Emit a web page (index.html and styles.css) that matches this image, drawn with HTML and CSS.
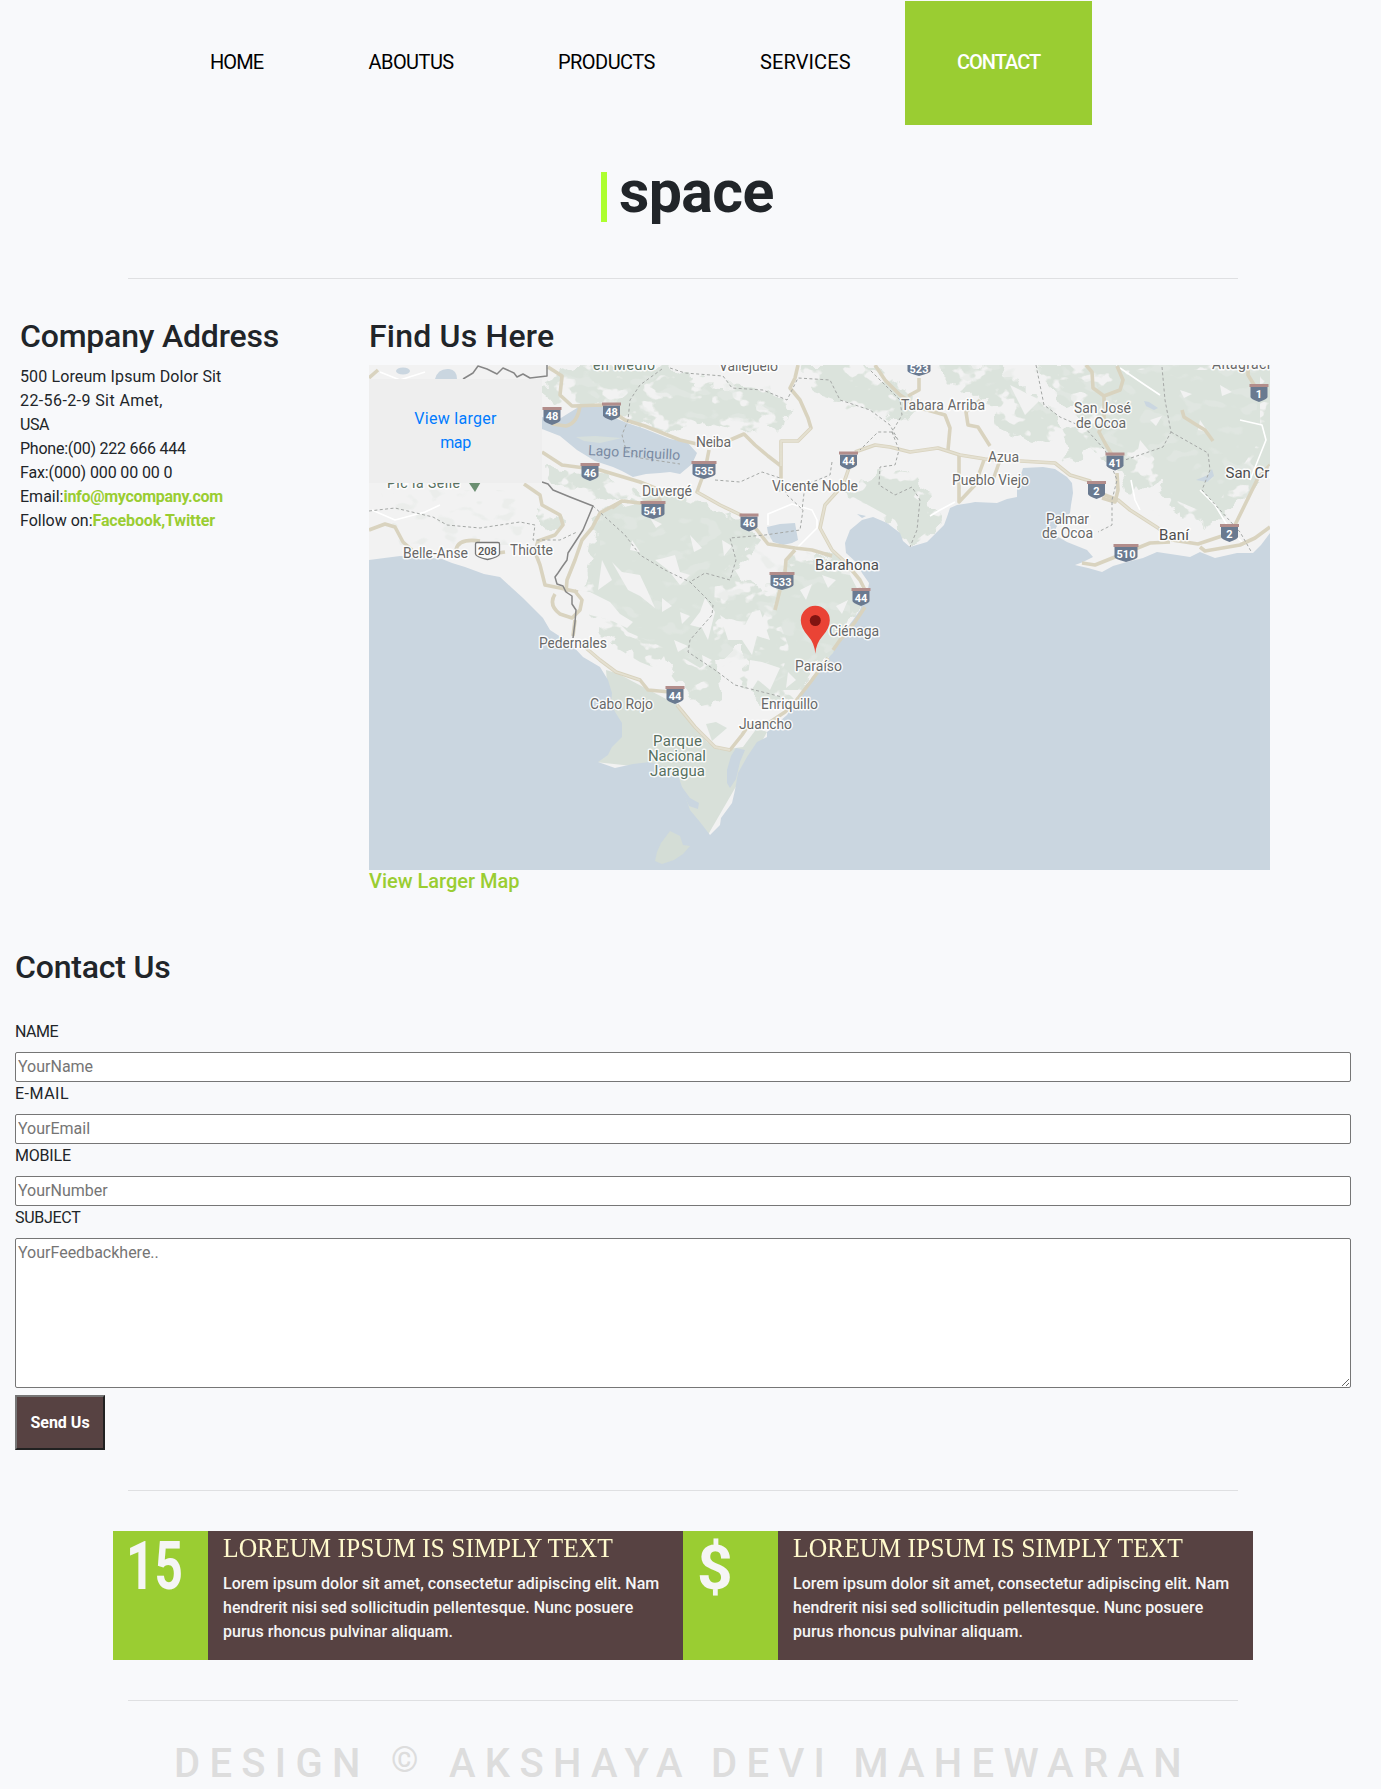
FILE: index.html
```html
<!DOCTYPE html>
<html lang="en">
<head>
<meta charset="utf-8">
<title>Space - Contact</title>
<link rel="stylesheet" href="styles.css">
</head>
<body>
<nav class="nav">
  <a class="nav-item home" href="#">HOME</a>
  <a class="nav-item about" href="#">ABOUTUS</a>
  <a class="nav-item products" href="#">PRODUCTS</a>
  <a class="nav-item services" href="#">SERVICES</a>
  <a class="nav-item active" href="#">CONTACT</a>
</nav>

<h1 class="logo"><span class="logo-bar"></span>space</h1>
<hr class="rule">

<section class="info">
  <div class="address">
    <h2 class="title">Company Address</h2>
    <ul class="lines">
      <li class="l1">500 Loreum Ipsum Dolor Sit</li>
      <li class="l2">22-56-2-9 Sit Amet,</li>
      <li class="l3">USA</li>
      <li class="l4">Phone:(00) 222 666 444</li>
      <li class="l5">Fax:(000) 000 00 00 0</li>
      <li>Email:<a class="mail" href="#">info@mycompany.com</a></li>
      <li>Follow on:<a class="social" href="#">Facebook,Twitter</a></li>
    </ul>
  </div>
  <div class="find">
    <h2 class="title find-title">Find Us Here</h2>
    <div class="map">
      <svg class="map-svg" width="901" height="505" viewBox="369 365 901 505">
        <defs>
          <filter id="rough" x="-5%" y="-5%" width="110%" height="110%">
            <feTurbulence type="fractalNoise" baseFrequency="0.07" numOctaves="2" seed="4" result="n"/>
            <feDisplacementMap in="SourceGraphic" in2="n" scale="22" xChannelSelector="R" yChannelSelector="G" result="d"/>
            <feTurbulence type="fractalNoise" baseFrequency="0.045 0.06" numOctaves="3" seed="11"/>
            <feColorMatrix values="0 0 0 0 0  0 0 0 0 0  0 0 0 0 0  14 0 0 0 -5" result="m"/>
            <feComposite in="d" in2="m" operator="in"/>
          </filter>
          <filter id="shade" x="0" y="0" width="100%" height="100%">
            <feTurbulence type="fractalNoise" baseFrequency="0.05 0.08" numOctaves="2" seed="23"/>
            <feColorMatrix values="0 0 0 0 .78  0 0 0 0 .82  0 0 0 0 .79  0 12 0 0 -7" result="m"/>
            <feComposite in="m" in2="SourceGraphic" operator="in"/>
          </filter>
          <g id="route">
            <path d="M-8.500-6h17V4Q8.500 6 0 9Q-8.500 6-8.500 4z" fill="#6a7a90"/>
            <path d="M-9.500-9h19v3h-19z" fill="#b28d8b"/>
          </g>
          <g id="route-wide">
            <path d="M-11.500-6h23V4Q11.500 6 0 9Q-11.500 6-11.500 4z" fill="#6a7a90"/>
            <path d="M-12.500-9h25v3h-25z" fill="#b28d8b"/>
          </g>
        </defs>
        <rect x="369" y="365" width="901" height="505" fill="#f2f2f2"/>

        <!-- terrain -->
        <g fill="#dbe3dc" filter="url(#rough)">
          <path d="M543 380 580 366 680 370 700 385 765 388 790 400 785 425 745 430 700 420 665 436 620 415 590 402 560 410 545 400z"/>
          <path d="M798 365H875L895 385 925 398 905 420 870 412 835 400 812 392z"/>
          <path d="M930 360 1000 366 1040 400 1070 430 1035 442 1000 430 990 400 960 390z"/>
          <path d="M1035 360H1275V470L1235 505 1210 528 1180 515 1160 480 1130 500 1120 470 1090 450 1065 462 1062 430 1090 420 1055 400z"/>
          <path d="M845 493 885 472 903 470 922 485 938 510 943 522 910 548 890 520z"/>
          <path d="M543 467 573 470 613 477 643 497 607 500 547 482z"/>
          <path d="M540 507 563 520 557 535 540 525z"/>
          <path d="M600 512 640 500 672 492 740 518 760 540 735 572 765 590 790 560 835 555 862 590 855 620 836 650 815 672 795 695 765 705 740 690 745 645 720 660 725 700 700 705 665 660 640 670 600 630 582 600 590 560z"/>
        </g>
        <path d="M606 512 640 503 672 496 735 522 748 545 715 580 712 660 700 668 670 650 628 632 606 610 592 582 597 540zM800 565 850 575 862 598 850 615 838 642 815 668 798 690 775 690 790 650 775 610zM1130 370H1260V440L1210 515 1175 500 1150 450 1100 440zM850 495 890 480 925 505 932 528 910 545 895 520z" fill="#dbe3dc"/>
        <path d="M606 670 633 678 665 692 685 712 707 742 720 750 743 747 757 728 767 732 760 745 705 840 690 820 670 770 595 762 612 745z" fill="#d8e0d9"/>
        <path d="M545 368 770 385 780 425 620 412zM930 365 1260 365 1250 500 1080 430zM600 510 730 520 850 570 850 640 760 690 600 620zM380 490 540 490 540 545 400 545z" fill="#000" filter="url(#shade)" opacity=".5"/>
        <g fill="#f2f2f2">
          <path d="M602 560 612 580 598 590zM612 562 622 572 640 575 648 592 655 608 640 596 628 590zM576 590 590 592 610 602 620 614 633 622 627 628 610 620 590 615 575 605zM705 598 715 612 708 640 702 628 690 625 700 612zM720 615 730 622 745 625 752 612 760 610 770 640 757 636 752 655 742 640 728 640zM655 560 668 570 680 585 690 575 680 572 675 555 664 558zM583 636 600 646 620 650 640 662 655 668 664 656 670 674 682 690 668 700 630 680 600 664zM750 660 762 662 780 668 770 690 758 680 745 700zM690 700 698 708 710 708 722 700 722 690 735 695 736 708 745 720 740 742 722 747 700 725 683 708 685 692z"/>
          <path d="M650 518 662 524 656 528zM690 535 702 548 694 552zM632 540 640 552 630 550zM722 540 732 546 724 556zM662 598 672 606 662 612zM680 612 690 616 682 624zM674 640 688 646 678 652zM702 655 712 660 704 668zM720 668 734 660 730 676zM735 570 748 566 742 582zM800 590 812 584 806 600zM822 575 836 580 828 588zM806 668 818 660 812 676zM788 672 796 680 786 688zM836 606 848 600 842 614z"/>
          <path d="M1128 500 1145 520 1130 535 1108 510zM1128 500 1136 486 1150 508 1162 518 1150 530zM1240 515 1262 495 1265 520 1245 530zM1010 385 1040 400 1025 415zM1180 390 1192 394 1184 398zM1150 420 1162 416 1156 426zM1220 385 1232 392 1222 396zM1200 420 1208 432 1198 430zM1140 440 1150 452 1138 450z"/>
        </g>
        <path d="M706 724 716 722 727 728 712 741z" fill="#dbe3dc"/>

        <!-- water -->
        <g fill="#cad6e0">
          <path d="M369 560 400 556 430 558 442 559 452 563 465 567 484 574 500 577 512 588 523 598 543 618 550 630 570 643 583 657 600 667 608 680 612 693 611 705 617 715 622 723 622 737 612 747 608 755 598 762 615 768 633 764 650 762 677 772 683 790 690 810 700 822 710 835 720 825 721 818 732 803 735 790 738 773 747 757 757 742 767 737 767 732 787 715 795 703 800 693 807 687 812 677 820 670 827 659 833 653 838 642 843 633 853 620 860 610 863 600 867 595 869 583 862 573 857 563 846 553 845 543 850 530 862 520 873 517 887 523 900 533 903 541 910 547 927 542 937 532 944 525 947 517 950 508 957 505 970 503 975 502 997 503 1007 499 1017 497 1017 487 1023 468 1043 467 1055 469 1067 477 1072 483 1073 493 1071 505 1070 513 1058 524 1053 534 1067 542 1087 550 1093 557 1083 562 1075 565 1088 568 1102 572 1113 566 1127 562 1143 558 1157 552 1177 555 1190 557 1200 552 1215 558 1237 553 1253 553 1261 545 1270 533V870H369z"/>
          <path d="M857 514 866 516 862 518z"/>
          <path d="M542 417 556 421 577 408 580 404 603 407 615 418 627 423 645 429 670 439 687 442 697 453 692 464 680 474 670 472 660 473 646 474 633 477 622 471 613 467 595 461 577 450 560 436 542 429z"/>
          <path d="M767 527 780 524 795 523 798 540 792 543 783 545 773 542 768 533z"/>
          <ellipse cx="403" cy="371" rx="7" ry="3.500"/>
          <path d="M435 379Q438 368 449 369Q457 370 457 379z"/>
          <path d="M1144 401 1149 402 1158 408 1154 410 1146 406zM1196 480 1208 475 1212 469 1214 476 1207 482z"/>
        </g>
        <path d="M727 783 727 770 731 756 736 748 745 750 740 762 736 779 730 788zM679 783 690 798 699 803 698 809 689 806z" fill="#cad6e0"/>
        <path d="M576 437 595 436 622 438 600 443 584 441z" fill="#d6dfdc"/>
        <path d="M670 831 680 836 683 845 690 846 683 854 674 860 662 864 655 861 657 852 661 843z" fill="#d4ddd6"/>

        <!-- minor lanes -->
        <g class="lane">
          <path d="M768 525 768 514 792 504 812 510 817 520 817 528 795 550M830 550 838 555M930 516 940 510 955 502M1240 420 1262 425 1266 440 1250 480M1200 490 1215 505 1230 530 1245 545M1131 480 1135 500 1140 510M1160 395 1145 385 1120 368M372 510 395 520 425 512 440 505M380 372 400 380 425 372"/>
        </g>

        <!-- roads -->
        <g class="road">
          <path d="M548 367 562 376 560 395 572 406 603 405 625 420 645 426 680 440 697 444M580 405Q578 423 566 426L552 424M542 452 562 465 600 470 640 482 655 488 660 500 640 503 622 501 612 508"/>
          <path d="M697 444 730 440 744 434 755 445 768 456 781 466M781 492 781 441 798 441 811 428 808 418 800 400 790 388 795 378 798 365M709 450 705 470 697 492 720 505 745 517 757 530 768 544 795 548 812 550 832 556"/>
          <path d="M850 465 843 485 825 505 820 528 832 550 845 562 860 580 866 592M865 607 855 622 840 640 833 650M855 452 875 445 890 447 910 452 938 448 960 455 985 459 1055 463 1070 475 1090 481 1092 490 1118 500 1130 510 1158 528 1172 540 1198 544 1225 535M1200 547 1205 551 1240 545 1255 538 1270 527M1235 525 1258 478 1270 465"/>
          <path d="M959 456V502L975 485 984 460M948 450 950 428 945 415 920 408 900 395 885 380 875 365M919 378V390L908 396M1000 460 993 480M990 446 978 427 968 425 966 412 980 400M1086 365 1092 372 1093 388 1104 396 1120 390 1123 380 1117 366M1104 396 1104 420 1099 432 1106 445 1114 458M1117 473 1118 490 1115 502 1102 498M1182 410 1184 417 1195 424 1205 430 1213 441M1248 365V375L1256 388M1082 563 1095 565 1120 555 1150 543 1170 542M369 378 378 370M795 550 786 560 785 572M780 590 775 610"/>
          <path d="M369 530 385 524 395 527 403 542 412 550M456 550Q458 538 480 541M505 552 498 553M524 484 540 495 542 505 560 515 563 525 555 535 538 541 535 552 540 565 545 585 560 588 578 592M622 501 600 513 592 528 582 540 575 560 567 580 566 592M555 594Q548 605 560 614L572 618 580 610 582 600 574 590M575 620 573 636M586 648 600 660 616 672 640 680 648 690 670 692M677 705 695 727 715 747 730 750 742 735 748 726 770 722 785 712 795 702 812 680 828 658"/>
        </g>
        <g class="road-core">
          <path d="M855 452 875 445 890 447 910 452 938 448 960 455 985 459 1055 463 1070 475 1090 481M1118 500 1130 510 1158 528M850 465 843 485 825 505 820 528 832 550 845 562M697 492 720 505 745 517M781 466V441L798 441 811 428M586 648 600 660 616 672 640 680M677 705 695 727 715 747 730 750"/>
        </g>

        <!-- province boundaries -->
        <g class="dash">
          <path d="M369 511 395 508 433 517 447 525 480 528 520 522 535 525 533 540 560 540 577 532M593 506 625 535 640 555 665 570 690 582M662 369 640 385 630 400 628 420 622 435 626 450 640 458 680 464"/>
          <path d="M670 368 685 373 723 376 732 388 763 390 787 400 798 378 830 380 840 400 870 410 890 425 898 440 892 432 902 415 900 400 870 370M892 432 878 432 860 450M892 432 899 450 895 465 880 467 879 485 895 495 912 487 920 500 917 530 910 547"/>
          <path d="M715 480 740 482 762 472 780 478 787 495 803 510 800 530 765 535 730 538 736 560 730 580 705 573 690 582 713 605 712 615 690 640 688 652 715 670 735 685 782 697M832 462 830 475 805 485 802 510"/>
          <path d="M1036 365 1044 405 1060 417 1085 428 1105 450 1117 480 1112 500 1112 525 1098 532M1162 367 1165 400 1171 432 1163 447 1125 460M1171 432 1208 453 1210 470 1202 490 1220 510 1240 532 1252 553"/>
        </g>
        <g class="border">
          <path d="M463 379 473 373 478 366 487 369 497 374 503 368 514 373 517 377 523 374 530 378 547 376V365"/>
          <path d="M542 482 548 484 553 490 570 497 593 506 583 530 568 553 567 560 562 567 558 573 555 577 557 584 563 586 566 592 572 596 572 604 576 610 575 622 573 638"/>
        </g>

        <!-- highway shields -->
        <g class="shields">
          <use href="#route" x="552" y="416"/><text x="552" y="420">48</text>
          <use href="#route" x="611.500" y="411.500"/><text x="611.500" y="416">48</text>
          <use href="#route" x="590" y="472"/><text x="590" y="476.500">46</text>
          <use href="#route-wide" x="653" y="510"/><text x="653" y="514.500">541</text>
          <use href="#route-wide" x="704" y="470"/><text x="704" y="474.500">535</text>
          <use href="#route" x="848.500" y="460.500"/><text x="848.500" y="465">44</text>
          <use href="#route" x="749" y="522.500"/><text x="749" y="527">46</text>
          <use href="#route-wide" x="782" y="581"/><text x="782" y="585.500">533</text>
          <use href="#route" x="861" y="597"/><text x="861" y="602">44</text>
          <use href="#route-wide" x="919" y="367"/><text x="919" y="373">523</text>
          <use href="#route" x="1115" y="461.500"/><text x="1115" y="466.500">41</text>
          <use href="#route" x="1096.500" y="490"/><text x="1096.500" y="494.500">2</text>
          <use href="#route" x="1259" y="393"/><text x="1259" y="397.500">1</text>
          <use href="#route-wide" x="1126" y="553"/><text x="1126" y="557.500">510</text>
          <use href="#route" x="1229.500" y="533"/><text x="1229.500" y="537.500">2</text>
          <use href="#route" x="675" y="695"/><text x="675" y="700">44</text>
          <path d="M477 542.500H498Q499.500 542.500 499.500 544V554Q499 557 487.500 559.500Q476 557 475.500 554V544Q475.500 542.500 477 542.500z" fill="#fafafa" stroke="#777" stroke-width="1.300"/>
          <text class="plain" x="487.500" y="554.500">208</text>
        </g>

        <!-- places -->
        <path d="M467 480H482L475 492z" fill="#6b8f71"/>
        <g class="places">
          <text class="park" x="593" y="370" textLength="62">en Medio</text>
          <text class="park" x="387" y="487.500" textLength="73">Pic la Selle</text>
          <text x="719" y="371" textLength="59">Vallejuelo</text>
          <text x="901" y="410" textLength="84">Tabara Arriba</text>
          <text x="1074" y="413" textLength="57">San José</text>
          <text x="1076" y="427.500" textLength="50">de Ocoa</text>
          <text x="1212" y="369" textLength="66">Altagracia</text>
          <text x="988" y="461.500" textLength="31">Azua</text>
          <text x="952" y="484.500" textLength="77">Pueblo Viejo</text>
          <text class="city" x="1225.500" y="478">San Cristóbal</text>
          <text x="1046" y="524" textLength="43">Palmar</text>
          <text x="1042" y="538" textLength="51">de Ocoa</text>
          <text class="city" x="1159" y="540" textLength="30">Baní</text>
          <text class="lake" x="588" y="455" textLength="92" transform="rotate(3 588 455)">Lago Enriquillo</text>
          <text x="696" y="447" textLength="35">Neiba</text>
          <text x="642" y="495.500" textLength="50">Duvergé</text>
          <text x="772" y="491" textLength="86">Vicente Noble</text>
          <text class="city" x="815" y="570" textLength="64">Barahona</text>
          <text x="403" y="558" textLength="65">Belle-Anse</text>
          <text x="510" y="555" textLength="43">Thiotte</text>
          <text x="539" y="648" textLength="68">Pedernales</text>
          <text x="590" y="709" textLength="63">Cabo Rojo</text>
          <text class="park big" x="653" y="745.500" textLength="49">Parque</text>
          <text class="park big" x="648" y="760.500" textLength="58">Nacional</text>
          <text class="park big" x="650" y="776" textLength="55">Jaragua</text>
          <text x="739" y="729" textLength="53">Juancho</text>
          <text x="761" y="709" textLength="57">Enriquillo</text>
          <text x="795" y="670.500" textLength="47">Paraíso</text>
          <text x="829" y="635.500" textLength="50">Ciénaga</text>
        </g>
        <path d="M815.300 653.700Q814.500 643 808 636Q800.800 628 800.800 620.300A14.500 14.500 0 0 1 829.800 620.300Q829.800 628 822.600 636Q816.200 643 815.300 653.700z" fill="#ea4335"/>
        <circle cx="815.300" cy="620.500" r="5.500" fill="#811411"/>
      </svg>
      <a class="map-card" href="#"><span class="mc1">View larger</span><br><span class="mc2">map</span></a>
    </div>
    <a class="larger" href="#">View Larger Map</a>
  </div>
</section>

<form class="contact">
  <h2 class="title contact-title">Contact Us</h2>
  <label class="label lb-name" for="name">NAME</label>
  <input class="field" id="name" type="text" placeholder="YourName">
  <label class="label lb-mail" for="mail">E-MAIL</label>
  <input class="field" id="mail" type="text" placeholder="YourEmail">
  <label class="label lb-mobile" for="mobile">MOBILE</label>
  <input class="field" id="mobile" type="text" placeholder="YourNumber">
  <label class="label lb-subject" for="subject">SUBJECT</label>
  <textarea class="field area" id="subject" placeholder="YourFeedbackhere.."></textarea>
  <button class="send" type="button">Send Us</button>
</form>

<hr class="rule">
<section class="cards">
  <div class="badge"><span class="num">15</span></div>
  <div class="card">
    <h3 class="card-title">LOREUM IPSUM IS SIMPLY TEXT</h3>
    <p class="card-text">Lorem ipsum dolor sit amet, consectetur adipiscing elit. Nam<br>hendrerit nisi sed sollicitudin pellentesque. Nunc posuere<br>purus rhoncus pulvinar aliquam.</p>
  </div>
  <div class="badge"><span class="dollar">$</span></div>
  <div class="card">
    <h3 class="card-title">LOREUM IPSUM IS SIMPLY TEXT</h3>
    <p class="card-text">Lorem ipsum dolor sit amet, consectetur adipiscing elit. Nam<br>hendrerit nisi sed sollicitudin pellentesque. Nunc posuere<br>purus rhoncus pulvinar aliquam.</p>
  </div>
</section>
<hr class="rule">
<footer class="footer">DESIGN <span class="copy">©</span> AKSHAYA DEVI MAHEWARAN</footer>
</body>
</html>
```
FILE: styles.css
```css
* { box-sizing: border-box; }
body {
  margin: 0;
  padding-top: 1px;
  height: 1789px;
  overflow: hidden;
  background: #f8f9fb;
  color: #212529;
  font: 400 16px/24px Roboto, "Liberation Sans", sans-serif;
}
a { text-decoration: none; }

.nav { display: flex; padding-left: 158px; height: 124px; }
.nav-item { padding: 46px 0 0 52px; font-size: 20px; line-height: 30px; color: #000; white-space: nowrap; }
.home { width: 158px; letter-spacing: -0.9px; }
.about { width: 190px; padding-left: 52.5px; letter-spacing: -0.55px; }
.products { width: 202px; letter-spacing: -0.55px; }
.services { width: 197px; letter-spacing: 0.1px; }
.active { width: 187px; background: yellowgreen; color: #fff; font-weight: 500; letter-spacing: -1px; }

.logo {
  display: flex;
  align-items: center;
  gap: 12px;
  height: 72px;
  margin: 31px 0 50px;
  padding-left: 601px;
  font-size: 59px;
  line-height: 72px;
  font-weight: 700;
  letter-spacing: -0.6px;
}
.logo-bar { width: 6px; height: 50px; margin-top: 10px; background: greenyellow; }

.rule { width: 1110px; height: 1px; margin: 0 0 0 128px; border: 0; background: #dfe0e2; }

.info { display: flex; padding-top: 38px; }
.address { width: 369px; padding-left: 20px; }
.title { margin: 0 0 10px; font-size: 32px; line-height: 38px; font-weight: 500; letter-spacing: -0.2px; }
.find-title { letter-spacing: 0.2px; }
.lines { margin: 0; padding: 0; list-style: none; }
.l1 { letter-spacing: 0.12px; }
.l2 { letter-spacing: 0.4px; }
.l3 { letter-spacing: -0.4px; }
.l4 { letter-spacing: -0.24px; }
.l5 { letter-spacing: -0.12px; }
.mail, .social, .larger { color: yellowgreen; font-weight: 700; }
.mail { letter-spacing: -0.3px; }
.social { letter-spacing: -0.13px; }

.map { position: relative; height: 505px; }
.map-svg { display: block; }
.map-card {
  position: absolute;
  left: 0;
  top: 14px;
  width: 173px;
  height: 104px;
  padding: 28px 0;
  background: #eee;
  color: #007bff;
  text-align: center;
}
.mc1 { letter-spacing: 0.27px; }
.mc2 { letter-spacing: -0.4px; }
.larger { display: block; font-size: 20px; font-weight: 500; line-height: 23px; margin-bottom: 1px; }

.map-svg text { font-family: Roboto, sans-serif; }
.lane path, .road path, .road-core path, .dash path, .border path { fill: none; stroke-linejoin: round; }
.lane path { stroke: #fff; stroke-width: 1.6; }
.road path { stroke: #d9d3bf; stroke-width: 3.6; }
.road-core path { stroke: #e4e0d1; stroke-width: 1.8; }
.dash path { stroke: #a5a8a6; stroke-width: 1; stroke-dasharray: 3 2.4; }
.border path { stroke: #868686; stroke-width: 1.5; }
.shields text { fill: #fff; font-size: 11px; font-weight: 700; text-anchor: middle; }
.shields .plain { fill: #555; font-weight: 500; }
.places text { font-size: 14px; fill: #686868; stroke: #fff; stroke-opacity: 0.85; stroke-width: 3px; stroke-linejoin: round; paint-order: stroke; }
.places .city { font-size: 15px; fill: #4e4e4e; }
.places .park { fill: #58705f; }
.places .big { font-size: 15px; }
.places .lake { fill: #7a8ba3; stroke: none; }

.contact { display: flex; flex-direction: column; align-items: flex-start; width: 1351px; padding-left: 15px; margin: 54px 0 40px; }
.contact-title { margin-bottom: 34px; }
.label { margin-bottom: 8px; }
.lb-name { letter-spacing: -0.5px; }
.lb-mail { letter-spacing: 0.5px; }
.lb-mobile { letter-spacing: -0.2px; }
.lb-subject { letter-spacing: -0.3px; }
.field { width: 100%; height: 30px; padding: 1px 2px 3px; border: 1px solid #767676; border-radius: 2px; background: #fff; font: inherit; }
.field::placeholder { color: #757575; opacity: 1; }
.area { height: 150px; padding: 2px; margin-bottom: 7px; resize: vertical; }
.send {
  width: 90px;
  height: 55px;
  padding: 0;
  border: 2px solid;
  border-color: #767676 #212121 #212121 #767676;
  background: #574242;
  color: #fff;
  font: inherit;
  font-weight: 700;
}

.cards { display: flex; height: 129px; margin: 40px 0; padding-left: 113px; }
.badge { width: 95px; padding-left: 13px; background: yellowgreen; color: whitesmoke; font-size: 66px; line-height: 72px; font-weight: 700; }
.num, .dollar { display: inline-block; transform-origin: left; }
.num { transform: scaleX(0.75); }
.dollar { padding-left: 1px; font-size: 61px; transform: scaleX(1.02); }
.card { width: 475px; padding-left: 15px; background: #574242; color: whitesmoke; white-space: nowrap; }
.card-title {
  width: 430px;
  margin: 0 0 8px;
  font: 400 28px/33px "Liberation Serif", serif;
  color: lemonchiffon;
  transform: scaleX(0.914);
  transform-origin: left;
}
.card-text { margin: 0; font-weight: 500; letter-spacing: 0.015px; }

.footer { height: 50px; margin-top: 38px; padding-left: 174px; color: #ddd; font-size: 40px; line-height: 50px; font-weight: 500; letter-spacing: 9.3px; white-space: nowrap; }
.copy { display: inline-block; font-size: 35px; line-height: 30px; margin: 0 2px; transform: translateY(-5px); }
```
